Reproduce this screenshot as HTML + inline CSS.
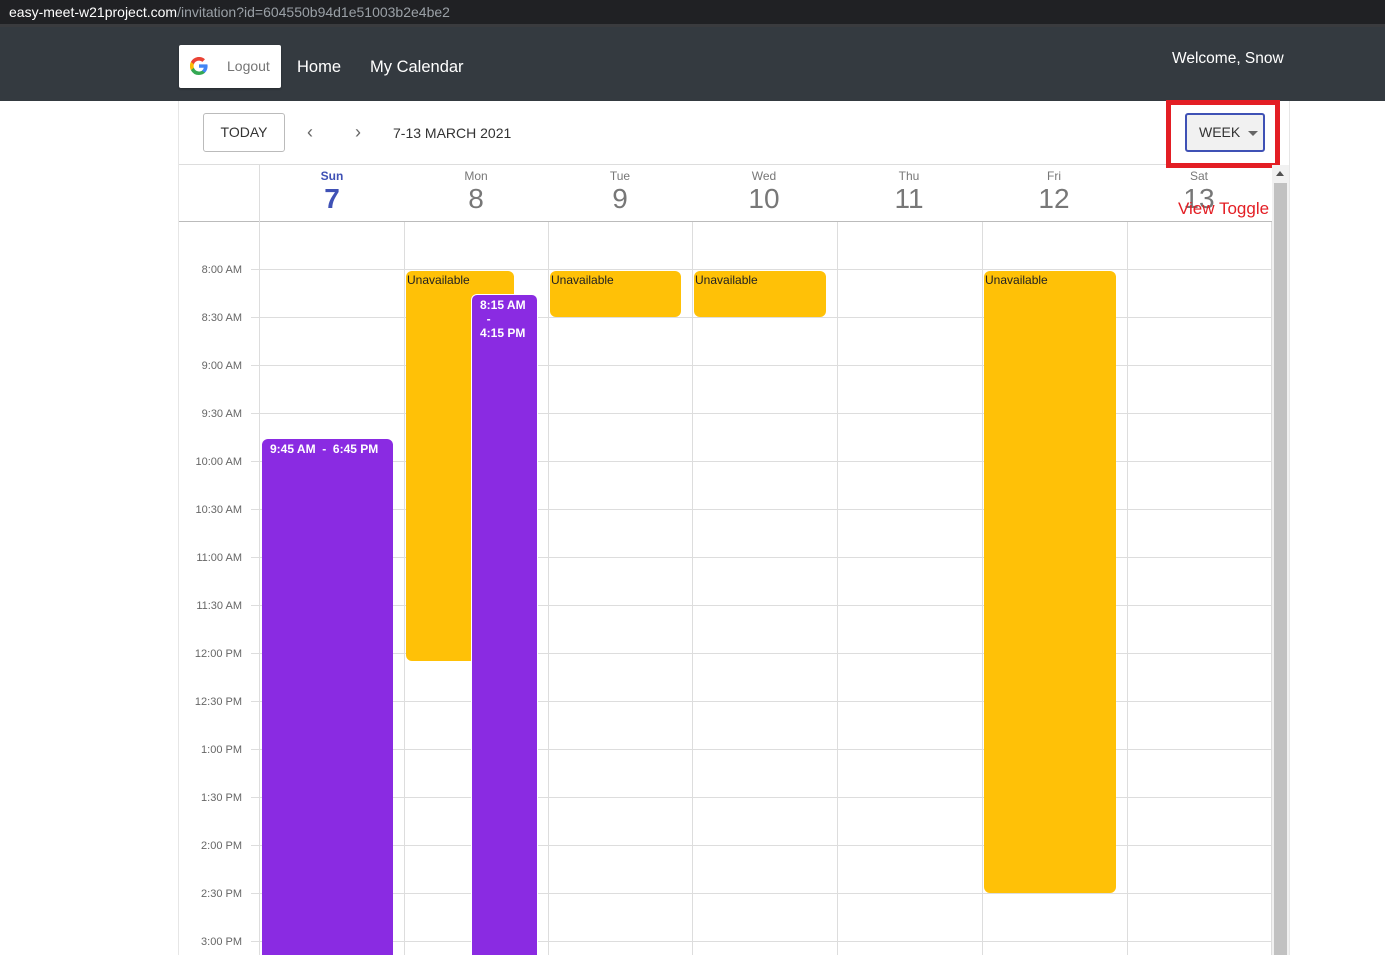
<!DOCTYPE html>
<html style="overflow:hidden;height:955px"><head><meta charset="utf-8"><style>
*{margin:0;padding:0;box-sizing:border-box}
body{width:1385px;height:955px;overflow:hidden;background:#fff;font-family:"Liberation Sans",Arial,sans-serif;position:relative}
.a{position:absolute}
.url{left:0;top:0;width:1385px;height:27px;background:#202124;border-bottom:3px solid #3a3b3e;color:#fff;font-size:14px;line-height:24px;padding-left:9px}
.url span{color:#9aa0a6}
.nav{left:0;top:27px;width:1385px;height:74px;background:#343a40}
.nl{color:#fff;font-size:16px}
.vl{width:1px;background:#ddd}
.hl{height:1px;background:#ddd}
.tl{font-size:11px;color:#666;width:60px;text-align:right;left:182px}
.ev{border-radius:6px}
.y{background:#ffc107;font-size:12px;color:#222;padding-left:1px;line-height:18px}
.p{background:#8a2be2;color:#fff;font-size:12px;font-weight:bold}
.dn{font-size:12px;color:#777;text-align:center;width:144px}
.dd{font-size:28px;color:#777;text-align:center;width:144px}
</style></head><body>
<div class="a url">easy-meet-w21project.com<span>/invitation?id=604550b94d1e51003b2e4be2</span></div>
<div class="a nav"></div>
<div class="a" style="left:179px;top:45px;width:102px;height:43px;background:#fff;border-radius:2px;box-shadow:0 1px 2px rgba(0,0,0,.3)"></div>
<svg class="a" style="left:190px;top:57px" width="18" height="18" viewBox="0 0 18 18">
<path d="M17.6 9.2c0-.6-.1-1.2-.2-1.8H9v3.4h4.8a4.1 4.1 0 0 1-1.8 2.7v2.2h2.9c1.7-1.6 2.7-3.9 2.7-6.5z" fill="#4285F4"/>
<path d="M9 18c2.4 0 4.5-.8 6-2.2l-2.9-2.2c-.8.5-1.800.9-3.1.9-2.4 0-4.4-1.6-5.1-3.7H.9v2.3A9 9 0 0 0 9 18z" fill="#34A853"/>
<path d="M3.9 10.8a5.4 5.4 0 0 1 0-3.6V4.9H.9a9 9 0 0 0 0 8.2z" fill="#FBBC05"/>
<path d="M9 3.6c1.3 0 2.5.5 3.4 1.3l2.6-2.6A9 9 0 0 0 .9 4.9l3 2.3C4.6 5.1 6.6 3.6 9 3.6z" fill="#EA4335"/>
</svg>
<div class="a" style="left:227px;top:58px;font-size:14px;color:#757575">Logout</div>
<div class="a nl" style="left:297px;top:58px;font-size:16.5px">Home</div>
<div class="a nl" style="left:370px;top:58px;font-size:16.5px">My Calendar</div>
<div class="a nl" style="left:1172px;top:50px;font-size:15.5px">Welcome, Snow</div>
<div class="a" style="left:178px;top:101px;width:1112px;height:854px;border-left:1px solid #e6e6e6;border-right:1px solid #e6e6e6"></div>
<div class="a" style="left:203px;top:113px;width:82px;height:39px;border:1px solid #bbb;border-radius:3px;font-size:14px;color:#333;text-align:center;line-height:37px">TODAY</div>
<div class="a" style="left:307px;top:122px;font-size:18px;color:#666">&#8249;</div>
<div class="a" style="left:355px;top:122px;font-size:18px;color:#666">&#8250;</div>
<div class="a" style="left:393px;top:125px;font-size:14px;color:#333">7-13 MARCH 2021</div>
<div class="a" style="left:1166px;top:100px;width:114px;height:68px;border:5px solid #e31e24"></div>
<div class="a" style="left:1185px;top:113px;width:80px;height:39px;border:2px solid #3f51b5;border-radius:3px;background:#f1f1f1;font-size:14px;color:#333;line-height:35px;padding-left:12px">WEEK</div>
<div class="a" style="left:1248px;top:131px;width:0;height:0;border-left:5px solid transparent;border-right:5px solid transparent;border-top:5px solid #666"></div>
<div class="a hl" style="left:179px;top:164px;width:987px"></div>
<div class="a" style="left:179px;top:221px;width:1093px;height:1px;background:#bbb"></div>
<div class="a dn" style="left:260px;top:169px;color:#3f51b5;font-weight:bold">Sun</div>
<div class="a dd" style="left:260px;top:183px;color:#3f51b5;font-weight:bold">7</div>
<div class="a dn" style="left:404px;top:169px">Mon</div><div class="a dd" style="left:404px;top:183px">8</div>
<div class="a dn" style="left:548px;top:169px">Tue</div><div class="a dd" style="left:548px;top:183px">9</div>
<div class="a dn" style="left:692px;top:169px">Wed</div><div class="a dd" style="left:692px;top:183px">10</div>
<div class="a dn" style="left:837px;top:169px">Thu</div><div class="a dd" style="left:837px;top:183px">11</div>
<div class="a dn" style="left:982px;top:169px">Fri</div><div class="a dd" style="left:982px;top:183px">12</div>
<div class="a dn" style="left:1127px;top:169px">Sat</div><div class="a dd" style="left:1127px;top:183px">13</div>
<div class="a" style="left:1178px;top:199px;font-size:17px;color:#e31e24">View Toggle</div>
<div class="a vl" style="left:259px;top:164px;height:791px"></div>
<div class="a vl" style="left:404px;top:222px;height:733px"></div>
<div class="a vl" style="left:548px;top:222px;height:733px"></div>
<div class="a vl" style="left:692px;top:222px;height:733px"></div>
<div class="a vl" style="left:837px;top:222px;height:733px"></div>
<div class="a vl" style="left:982px;top:222px;height:733px"></div>
<div class="a vl" style="left:1127px;top:222px;height:733px"></div>
<div class="a vl" style="left:1271px;top:222px;height:733px"></div>
<div id="g"></div>
<script>
var L=["8:00 AM","8:30 AM","9:00 AM","9:30 AM","10:00 AM","10:30 AM","11:00 AM","11:30 AM","12:00 PM","12:30 PM","1:00 PM","1:30 PM","2:00 PM","2:30 PM","3:00 PM"],h="";
for(var i=0;i<L.length;i++){var y=269+i*48;h+='<div class="a hl" style="left:251px;top:'+y+'px;width:1021px"></div><div class="a tl" style="top:'+(y-5)+'px">'+L[i]+'</div>';}
document.getElementById("g").innerHTML=h;
</script>
<div class="a ev y" style="left:406px;top:271px;width:108px;height:390px">Unavailable</div>
<div class="a ev y" style="left:550px;top:271px;width:131px;height:46px">Unavailable</div>
<div class="a ev y" style="left:694px;top:271px;width:132px;height:46px">Unavailable</div>
<div class="a ev y" style="left:984px;top:271px;width:132px;height:622px">Unavailable</div>
<div class="a p" style="left:471px;top:294px;width:67px;height:661px;border:1px solid #fff;border-bottom:none;border-radius:6px 6px 0 0;padding:3px 0 0 8px;line-height:14px">8:15 AM<br>&nbsp;&nbsp;-<br>4:15 PM</div>
<div class="a p" style="left:262px;top:439px;width:131px;height:516px;border-radius:6px 6px 0 0;padding:3px 0 0 8px;line-height:14px;white-space:pre">9:45 AM  -  6:45 PM</div>
<div class="a" style="left:1272px;top:165px;width:17px;height:790px;background:#f1f1f1"></div>
<div class="a" style="left:1276px;top:171px;width:0;height:0;border-left:4px solid transparent;border-right:4px solid transparent;border-bottom:5px solid #505050"></div>
<div class="a" style="left:1274px;top:183px;width:13px;height:772px;background:#c1c1c1"></div>
</body></html>
